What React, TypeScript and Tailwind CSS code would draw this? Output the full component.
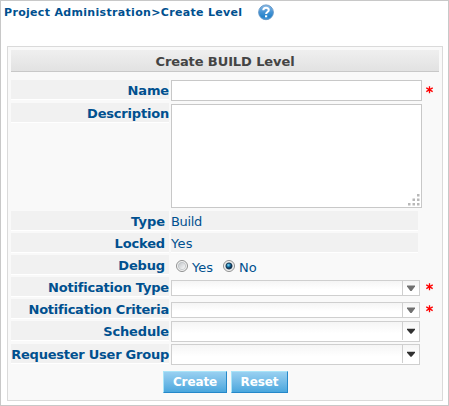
import type { ReactNode } from 'react';

function Row({ label, height, children, required, inset, tracking = 'tracking-[-0.15px]' }: {
  label: string; height: string; children?: ReactNode; required?: boolean; inset?: boolean; tracking?: string;
}) {
  return (
    <div className={`flex ${height}`}>
      <div className={`h-[20px] w-[158px] shrink-0 border-b border-white bg-[#f1f1f1] text-right text-[13px] leading-[21px] font-bold whitespace-nowrap ${tracking} ${inset ? 'pr-[4px]' : ''}`}>
        {label}
      </div>
      <div className="ml-[2px] w-[251px] shrink-0">{children}</div>
      {required && <Star />}
    </div>
  );
}

function Star() {
  return (
    <svg className="mt-[6px] ml-[4px] shrink-0" width="7" height="8" viewBox="0 0 7 8" stroke="#f00" strokeWidth="1.3">
      <path d="M3.5 .2v7M.3 1.8l6.4 3.8M6.7 1.8L.3 5.6" />
    </svg>
  );
}

function TextCell({ children }: { children: ReactNode }) {
  return (
    <div className="h-[20px] w-[247px] border-b border-white bg-[#f1f1f1] text-[13px] leading-[21px]">
      {children}
    </div>
  );
}

function Combo({ muted }: { muted?: boolean }) {
  return (
    <div className={`flex w-[249px] border border-[#cfcfcf] bg-linear-to-b from-[#f5f5f5] to-white to-60% ${muted ? 'mt-[3px] h-[16px]' : 'h-[21px]'}`}>
      <div className="flex-1" />
      <div className={`flex w-[17px] justify-center border-l border-[#cfcfcf] ${muted ? 'h-[14px]' : 'h-[18px]'}`}>
        <svg className={muted ? 'mt-[4px]' : 'mt-[6px]'} width="8" height="6" viewBox="0 0 8 6">
          <path d={muted ? 'M0 .5h8v1L4.6 6H3.4L0 1.5z' : 'M0 .8h8v1L4.5 5.8h-1L0 1.8z'} fill={muted ? '#707070' : '#303030'} />
        </svg>
      </div>
    </div>
  );
}

function Radio({ on }: { on?: boolean }) {
  return (
    <svg className="shrink-0" width="12" height="12" viewBox="0 0 12 12">
      <defs>
        <linearGradient id="dish" x1="0" y1="0" x2="1" y2="1">
          <stop stopColor="#bfc3c7" /><stop offset="1" stopColor="#fff" />
        </linearGradient>
        <radialGradient id="bead" cx=".4" cy=".35">
          <stop stopColor="#8edcf8" /><stop offset=".5" stopColor="#2487b8" /><stop offset="1" stopColor="#0b2f52" />
        </radialGradient>
      </defs>
      <circle cx="6" cy="6" r="5.5" fill="#f6f6f6" stroke="#8e8f8f" />
      <circle cx="6" cy="6" r="3.7" fill="url(#dish)" stroke="#b9bdc0" strokeWidth=".7" />
      {on && <circle cx="6" cy="6" r="3" fill="url(#bead)" stroke="#123552" strokeWidth=".8" />}
    </svg>
  );
}

function Help() {
  return (
    <svg className="mt-[3px] shrink-0" width="16" height="17" viewBox="0 0 16 17">
      <defs>
        <linearGradient id="ball" x1="0" y1="0" x2="0" y2="1">
          <stop stopColor="#8cbce8" /><stop offset=".45" stopColor="#4a96d6" /><stop offset=".8" stopColor="#2583cb" /><stop offset="1" stopColor="#4b9bdc" />
        </linearGradient>
      </defs>
      <circle cx="8" cy="8.3" r="7.4" fill="url(#ball)" stroke="#6294c4" strokeWidth=".9" />
      <path d="M5.3 6.3C5.3 3 10.8 3 10.8 6.1C10.8 8 8.1 8 8.1 10" fill="none" stroke="#fff" strokeWidth="2" />
      <rect x="7" y="11.3" width="2.2" height="2" fill="#fff" />
    </svg>
  );
}

function Button({ children, width }: { children: string; width: string }) {
  return (
    <button className={`h-[22px] ${width} border border-t-[#a9e4f8] border-r-[#2588c9] border-b-[#2588c9] border-l-[#a9e4f8] bg-linear-to-b from-[#98d0f1] to-[#4aa7dd] pt-px text-[12px] leading-[19px] font-bold tracking-[-0.1px] text-white`}>
      {children}
    </button>
  );
}

export default function App() {
  return (
    <div className="h-[406px] w-[449px] border border-[#c8c8c8] bg-white pl-[6px] font-['DejaVu_Sans',sans-serif] text-[#00508f]">
      <div className="-ml-[3px] flex h-[45px]">
        <div className="mt-[3px] w-[254px] text-[11px] leading-[17px] font-bold tracking-[0.32px] whitespace-nowrap">Project Administration&gt;Create Level</div>
        <Help />
      </div>
      <div className="h-[355px] w-[436px] border border-[#dadada] bg-[#f9f9f9] px-[3px] pt-[3px]">
        <div className="mb-[8px] h-[22px] w-[428px] border-b border-[#c8c8c8] bg-linear-to-b from-[#efefef] to-[#e2e2e2] text-center text-[13px] leading-[23px] font-bold tracking-[-0.1px] text-[#444]">
          Create BUILD Level
        </div>
        <Row label="Name" height="h-[23px]" required>
          <input className="block h-[21px] w-[251px] border border-[#c8c8c8] bg-white outline-none" />
        </Row>
        <Row label="Description" height="h-[108px]" tracking="tracking-[-0.2px]">
          <div className="mt-[1px] flex h-[104px] w-[251px] items-end justify-end border border-[#c8c8c8] bg-white p-[1px]">
            <svg width="12" height="12" fill="#b8b8b8">
              <path d="M9 0h2.5v2.5H9zM4.5 4.5h2.5v2.5H4.5zM9 4.5h2.5v2.5H9zM0 9h2.5v2.5H0zM4.5 9h2.5v2.5H4.5zM9 9h2.5v2.5H9z" />
            </svg>
          </div>
        </Row>
        <Row label="Type" height="h-[22px]" inset tracking="tracking-[0px]"><TextCell><span className="tracking-[-0.35px]">Build</span></TextCell></Row>
        <Row label="Locked" height="h-[22px]" inset><TextCell><span className="tracking-[0.3px]">Yes</span></TextCell></Row>
        <Row label="Debug" height="h-[22px]" inset>
          <div className="flex items-start pt-[5px] pl-[5px] text-[13px] leading-[15px]">
            <Radio /><span className="ml-[4px] w-[31px]">Yes</span>
            <Radio on /><span className="ml-[4px]">No</span>
          </div>
        </Row>
        <Row label="Notification Type" height="h-[22px]" tracking="tracking-[-0.2px]" required><Combo muted /></Row>
        <Row label="Notification Criteria" height="h-[22px]" tracking="tracking-[-0.24px]" required><Combo muted /></Row>
        <Row label="Schedule" height="h-[23px]"><Combo /></Row>
        <Row label="Requester User Group" height="h-[27px]" tracking="tracking-[-0.24px]"><Combo /></Row>
        <div className="ml-[152px] flex gap-[4px]">
          <Button width="w-[64px]">Create</Button>
          <Button width="w-[57px]">Reset</Button>
        </div>
      </div>
    </div>
  );
}
